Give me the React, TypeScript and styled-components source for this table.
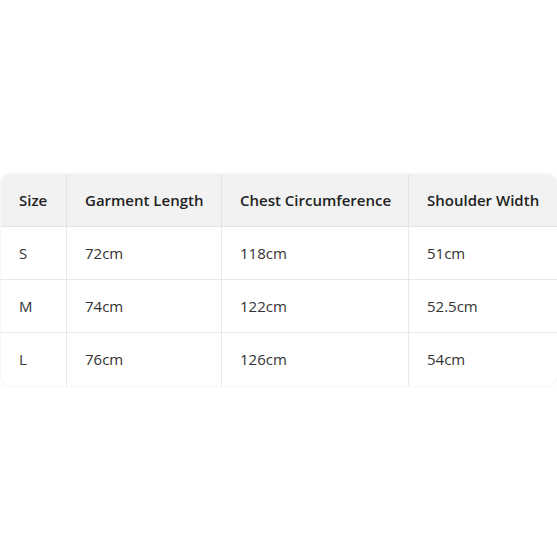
import React from "react";
import styled, { createGlobalStyle } from "styled-components";

const Global = createGlobalStyle`
  html, body { margin: 0; padding: 0; background: #fff; }
  body { font-family: "Open Sans", "Noto Sans", sans-serif; }
`;

const Page = styled.div`
  min-height: 557px;
  display: flex;
  align-items: center;
  padding: 1px 0 0 1px;
`;

const Table = styled.table`
  width: 556px;
  border-collapse: separate;
  border-spacing: 0;
  border-radius: 10px;
  overflow: hidden;
  box-shadow: 0 0 2px rgba(0, 0, 0, 0.12);
  table-layout: fixed;
`;

const HeadCell = styled.th<{ $w: number; $first?: boolean }>`
  width: ${(p) => p.$w}px;
  height: 53px;
  box-sizing: border-box;
  padding: 0 0 0 18px;
  text-align: left;
  font-size: 15px;
  font-weight: 600;
  color: #222;
  background: #f2f2f2;
  border-left: ${(p) => (p.$first ? "none" : "1px solid #e3e3e3")};
  border-bottom: 1px solid #e3e3e3;
  white-space: nowrap;
`;

const Cell = styled.td<{ $first?: boolean; $last?: boolean }>`
  height: 53px;
  box-sizing: border-box;
  padding: 0 0 0 18px;
  font-size: 15px;
  font-weight: 400;
  color: #333;
  border-left: ${(p) => (p.$first ? "none" : "1px solid #e8e8e8")};
  border-bottom: ${(p) => (p.$last ? "none" : "1px solid #e8e8e8")};
  white-space: nowrap;
`;

const headers = [
  { label: "Size", w: 65 },
  { label: "Garment Length", w: 155 },
  { label: "Chest Circumference", w: 187 },
  { label: "Shoulder Width", w: 149 },
];

const rows = [
  ["S", "72cm", "118cm", "51cm"],
  ["M", "74cm", "122cm", "52.5cm"],
  ["L", "76cm", "126cm", "54cm"],
];

export default function App() {
  return (
    <>
      <Global />
      <Page>
        <Table>
          <thead>
            <tr>
              {headers.map((h, i) => (
                <HeadCell key={h.label} $w={h.w} $first={i === 0}>
                  {h.label}
                </HeadCell>
              ))}
            </tr>
          </thead>
          <tbody>
            {rows.map((r, ri) => (
              <tr key={r[0]}>
                {r.map((c, ci) => (
                  <Cell key={ci} $first={ci === 0} $last={ri === rows.length - 1}>
                    {c}
                  </Cell>
                ))}
              </tr>
            ))}
          </tbody>
        </Table>
      </Page>
    </>
  );
}
